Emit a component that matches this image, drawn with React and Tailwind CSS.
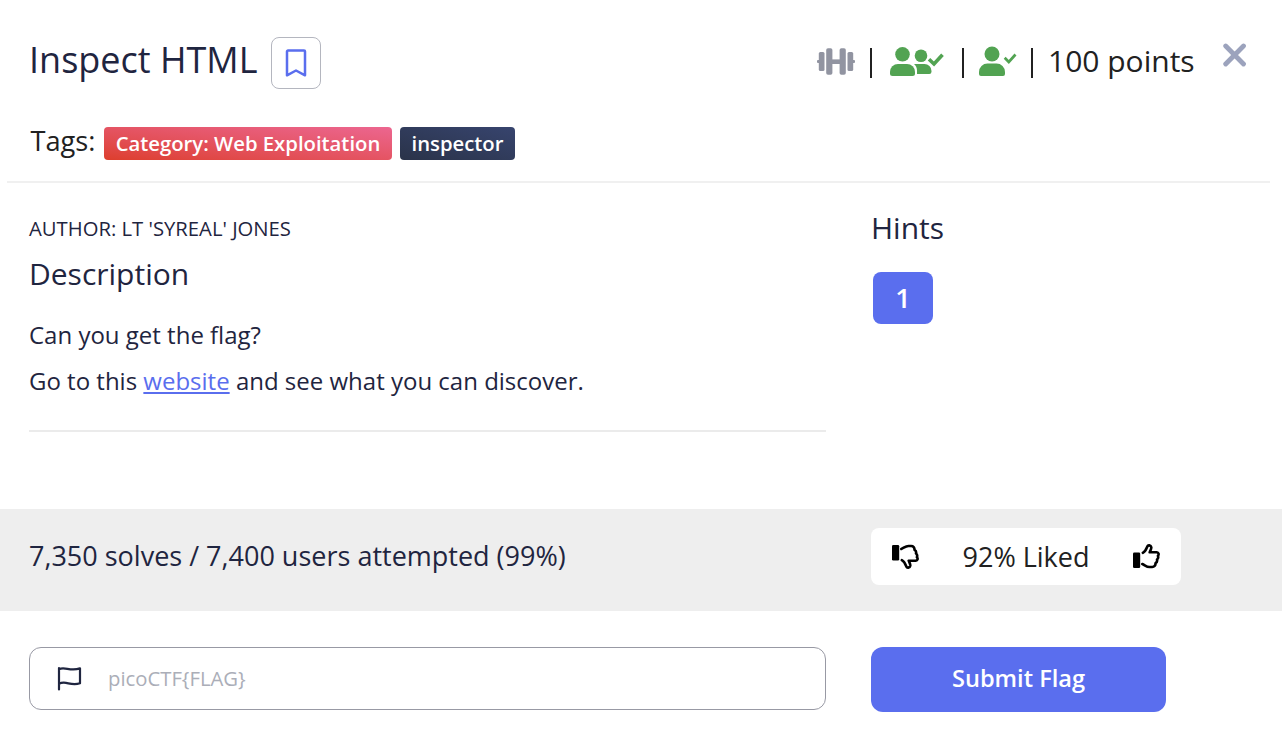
import React from "react";

const Bar = ({ className }) => <span className={`w-[2px] h-[30px] mt-[3px] bg-[#212121] ${className}`} />;

const Dumbbell = () => (
  <svg width="38" height="27" viewBox="0 0 38 27" fill="#9194a1" className="shrink-0">
    <rect x="0" y="12" width="4" height="3" rx="1" />
    <rect x="34" y="12" width="4" height="3" rx="1" />
    <rect x="1.800" y="4" width="5.700" height="19" rx="1.500" />
    <rect x="9.200" y="0.300" width="6.200" height="26.400" rx="1.800" />
    <rect x="14.500" y="11.400" width="9" height="4.600" />
    <rect x="22.600" y="0.300" width="6.200" height="26.400" rx="1.800" />
    <rect x="30.500" y="4" width="5.700" height="19" rx="1.500" />
  </svg>
);

const Group = () => (
  <svg width="54" height="30" viewBox="0 0 54 30" fill="#52a352" className="shrink-0">
    <circle cx="12.500" cy="7.300" r="7.300" />
    <path d="M0 26.500V25a8 8 0 0 1 8-8h9a8 8 0 0 1 8 8v1.500a2.500 2.500 0 0 1-2.500 2.500h-20a2.500 2.500 0 0 1-2.500-2.500z" />
    <circle cx="31" cy="8.700" r="6.300" />
    <path d="M24 17h10.500a7 7 0 0 1 7 7v.7a2.200 2.200 0 0 1-2.200 2.200H27v-3.500c0-2.600-1.200-4.900-3-6.400z" />
    <path d="M39 12.200l5 4.800 8.500-9.300" fill="none" stroke="#52a352" strokeWidth="3.600" />
  </svg>
);

const Person = () => (
  <svg width="38" height="31" viewBox="0 0 38 31" fill="#52a352" className="shrink-0">
    <circle cx="13" cy="8" r="7.500" />
    <path d="M0 28v-2a8.500 8.500 0 0 1 8.500-8.500h9A8.500 8.500 0 0 1 26 26v2a2 2 0 0 1-2 2H2a2 2 0 0 1-2-2z" />
    <path d="M25.700 11.800l4.100 4.200 6.700-7.500" fill="none" stroke="#52a352" strokeWidth="2.700" />
  </svg>
);

const Thumb = ({ className }) => (
  <svg width="28" height="25" viewBox="0 0 28 25" className={className}>
    <rect x="0" y="8.500" width="7.200" height="15.500" rx="1.300" />
    <path
      d="M9.800 8.800C12.500 7.500 13.500 4.500 14.300 2.500C15 .8 17.800 1 18.300 3.300C18.500 5 17.300 6.500 16.700 8.300H23.700C25.700 8.500 26.200 10.300 24.900 11.800C25.500 13.300 25 14.800 24 15.600C24.400 17.200 23.700 18.600 22.500 19.200C22.700 21.500 21.200 23 19.200 23H16.500C13.500 23 11.800 21 9.300 20"
      fill="none" stroke="#000" strokeWidth="2.600" strokeLinecap="round" strokeLinejoin="round"
    />
  </svg>
);

export default function App() {
  return (
    <div className="w-[1282px] h-[740px] overflow-hidden bg-white flex flex-col text-[#1f2540] whitespace-nowrap font-['Open_Sans',sans-serif]">
      <header className="h-[183px] ml-[7px] mr-[12px] shrink-0 border-b-2 border-[#f0f0f0] flex flex-col">
        <div className="flex items-start pl-[22px] h-[127px]">
          <h1 className="mt-[35px] w-[242px] text-[36px] leading-[50px]">Inspect HTML</h1>
          <button className="mt-[37px] w-[50px] h-[52px] rounded-lg border border-[#b4b6bf] flex items-center justify-center">
            <svg width="22" height="28" viewBox="0 0 22 28" fill="none" stroke="#5a6eee" strokeWidth="2.500" strokeLinejoin="round">
              <path d="M3 1.500H19a1 1 0 0 1 1 1V26.300L11 21.500L2 26.300V2.500a1 1 0 0 1 1-1z" />
            </svg>
          </button>
          <div className="ml-[496px] mt-[46px] h-[31px] flex items-center text-[#212121]">
            <Dumbbell />
            <Bar className="ml-[15px]" />
            <span className="ml-[18px]"><Group /></span>
            <Bar className="ml-[18px]" />
            <span className="ml-[15px]"><Person /></span>
            <Bar className="ml-[14px]" />
            <span className="ml-[15px] -mt-[1px] text-[30px] leading-[30px]">100 points</span>
          </div>
          <svg className="ml-[28px] mt-[43px] shrink-0" width="24" height="24" viewBox="0 0 24 24" stroke="#9ca3bd" strokeWidth="4.800" strokeLinecap="round">
            <path d="M2.700 3L20.500 21M20.500 3L2.700 21" />
          </svg>
        </div>
        <div className="flex items-start pl-[23px]">
          <span className="w-[74px] -mt-[6px] pl-[0.5px] text-[27.2px] leading-[40px] text-[#212121]">Tags:</span>
          <span className="w-[288px] h-[33px] rounded-[4px] bg-linear-to-tr from-[#dd3e2c] to-[#ec6690] text-white text-[20.3px] leading-[33px] font-semibold text-center">Category: Web Exploitation</span>
          <span className="ml-2 w-[115px] h-[33px] rounded-[4px] bg-linear-to-tr from-[#2a3349] to-[#37446e] text-white text-[20.3px] leading-[33px] font-semibold text-center">inspector</span>
        </div>
      </header>

      <main className="h-[326px] shrink-0 flex pl-[29px]">
        <section className="w-[797px]">
          <p className="mt-[30px] text-[20.25px] leading-[30px]">AUTHOR: LT 'SYREAL' JONES</p>
          <h2 className="mt-[11px] text-[30px] leading-[40px]">Description</h2>
          <p className="mt-[21px] text-[24px] leading-[40px]">Can you get the flag?</p>
          <p className="mt-[6px] text-[24px] leading-[40px]">
            Go to this <a className="text-[#5a6eee] underline decoration-2 underline-offset-2">website</a> and see what you can discover.
          </p>
          <hr className="mt-[29px] border-0 h-[2px] bg-[#ebebeb]" />
        </section>
        <aside className="ml-[45px]">
          <h2 className="mt-[25px] text-[30px] leading-[40px]">Hints</h2>
          <button className="mt-[24px] ml-[2px] w-[60px] h-[52px] rounded-lg bg-[#5a6eee] text-white font-semibold text-[27px]">1</button>
        </aside>
      </main>

      <section className="h-[102px] shrink-0 bg-[#eeeeee] flex pl-[29px]">
        <p className="w-[842px] mt-[27px] text-[27px] leading-[40px]">7,350 solves / 7,400 users attempted (99%)</p>
        <div className="mt-[19px] w-[310px] h-[57px] rounded-lg bg-white flex items-center justify-between pl-[21px] pr-[20px] text-[#212121]">
          <Thumb className="-scale-y-100" />
          <span className="mt-[2px] -ml-[1px] text-[27px]">92% Liked</span>
          <Thumb />
        </div>
      </section>

      <footer className="flex pl-[29px] pt-[36px]">
        <div className="w-[797px] h-[63px] rounded-xl border border-[#9899a4] flex items-center pl-[27px]">
          <svg width="25" height="25" viewBox="0 0 25 25" fill="none" stroke="#1f2540" strokeWidth="2.200" strokeLinecap="round" strokeLinejoin="round">
            <path d="M2 2V23.500M2 3.200C8 .2 13 5.900 23 2.400V17.300C13 20.500 9 14 2 17.800" />
          </svg>
          <span className="ml-[26px] text-[20.3px] text-[#abaeb8]">picoCTF{"{"}FLAG{"}"}</span>
        </div>
        <button className="ml-[45px] w-[295px] h-[65px] pb-[1px] rounded-xl bg-[#5a6eee] text-white text-[23.6px] font-semibold">Submit Flag</button>
      </footer>
    </div>
  );
}
